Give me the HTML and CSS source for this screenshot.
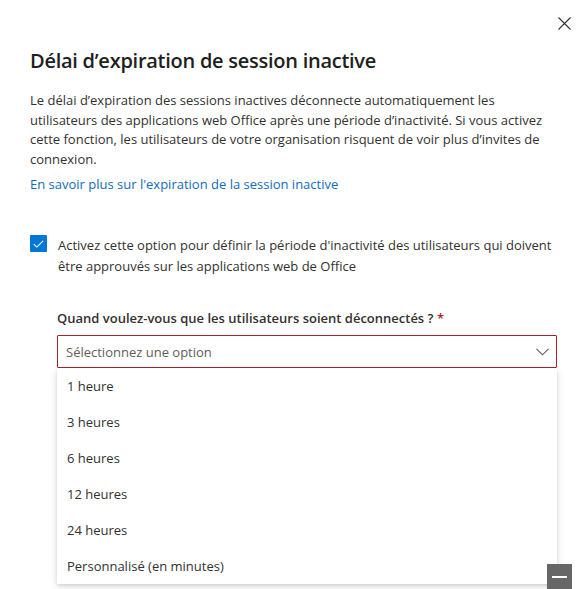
FILE: index.html
```html
<!DOCTYPE html>
<html lang="fr">
<head>
<meta charset="utf-8">
<title>Délai d'expiration de session inactive</title>
<link rel="stylesheet" href="styles.css">
</head>
<body>
<div class="panel">
  <div class="topbar">
    <button class="close" aria-label="Fermer">
      <svg width="13" height="13" viewBox="0 0 13 13"><path d="M0.5 0.5 L12.5 12.5 M12.5 0.5 L0.5 12.5" stroke="#323130" stroke-width="1.1" fill="none"/></svg>
    </button>
  </div>
  <div class="content">
    <h1 class="title">Délai d’expiration de session inactive</h1>
    <p class="desc">Le délai d’expiration des sessions inactives déconnecte automatiquement les utilisateurs des applications web Office après une période d’inactivité. Si vous activez cette fonction, les utilisateurs de votre organisation risquent de voir plus d’invites de connexion.</p>
    <a class="link" href="#">En savoir plus sur l'expiration de la session inactive</a>

    <label class="check">
      <span class="box">
        <svg width="11" height="8" viewBox="0 0 11 8"><path d="M0.8 4.2 L3.8 7.1 L10.2 0.8" stroke="#fff" stroke-width="1.1" fill="none"/></svg>
      </span>
      <span class="check-text">Activez cette option pour définir la période d'inactivité des utilisateurs qui doivent être approuvés sur les applications web de Office</span>
    </label>

    <div class="field">
      <div class="field-label">Quand voulez-vous que les utilisateurs soient déconnectés ? <span class="req">*</span></div>
      <div class="dropdown">
        <div class="select">
          <span class="placeholder">Sélectionnez une option</span>
          <svg class="chev" width="13" height="8" viewBox="0 0 13 8"><path d="M0.5 0.8 L6.5 6.8 L12.5 0.8" stroke="#605e5c" stroke-width="1.1" fill="none"/></svg>
        </div>
        <ul class="options">
          <li>1 heure</li>
          <li>3 heures</li>
          <li>6 heures</li>
          <li>12 heures</li>
          <li>24 heures</li>
          <li>Personnalisé (en minutes)</li>
        </ul>
      </div>
    </div>
  </div>
</div>
<button class="minbtn" aria-label="Réduire"><span></span></button>
</body>
</html>
```
FILE: styles.css
```css
* { box-sizing: border-box; }
html, body { margin: 0; padding: 0; background: #fff; }
body {
  font-family: "Open Sans", "Noto Sans", sans-serif;
  color: #323130;
  font-size: 13px;
  width: 577px;
  height: 589px;
  overflow: hidden;
}
.panel { width: 577px; }
.topbar {
  display: flex;
  justify-content: flex-end;
  padding: 16px 5px 0 0;
  height: 40px;
}
.close {
  border: 0; background: none; padding: 1px; width: 15px; height: 15px;
  display: flex; align-items: center; justify-content: center;
}
.content { padding: 0 21px 0 30px; }
.title {
  margin: 7px 0 0;
  font-size: 20px;
  font-weight: 600;
  line-height: 28px;
  letter-spacing: -0.26px;
  color: #201f1e;
}
.desc {
  margin: 16px 0 0;
  line-height: 19.5px;
}
.link {
  display: block;
  margin-top: 5px;
  color: #0f6cbd;
  text-decoration: none;
  line-height: 20px;
}
.check {
  display: flex;
  gap: 11px;
  margin-top: 41px;
  line-height: 21px;
}
.box {
  flex: 0 0 17px;
  width: 17px; height: 17px;
  margin-top: 0px;
  background: #0078d4;
  border-radius: 1px;
  display: flex; align-items: center; justify-content: center;
}
.field { margin: 31px 0 0 27px; }
.field-label {
  font-weight: 600;
  line-height: 20px;
  margin-bottom: 7px;
}
.req { color: #a4262c; }
.dropdown { position: relative; width: 500px; }
.select {
  height: 33px;
  border: 1px solid #a4262c;
  border-radius: 1px;
  display: flex; align-items: center; justify-content: space-between;
  padding: 0 7px 0 8px;
}
.placeholder { color: #605e5c; }
.options {
  position: absolute;
  left: 0; right: 0; top: 33px;
  margin: 0; padding: 0;
  list-style: none;
  background: #fff;
  box-shadow: 0 3px 8px rgba(0,0,0,0.13), 0 1px 3px rgba(0,0,0,0.1);
}
.options li {
  height: 36px;
  line-height: 36px;
  padding-left: 10px;
  color: #323130;
}
.minbtn {
  position: fixed;
  right: 5px; bottom: 0;
  width: 25px; height: 25px;
  border: 0; padding: 0;
  background: #676767;
  display: flex; align-items: center; justify-content: center;
}
.minbtn span {
  display: block; width: 15px; height: 2px; background: #fff;
}
```
